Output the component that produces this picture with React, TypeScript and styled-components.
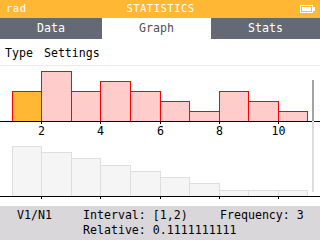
import React from 'react';
import styled, { createGlobalStyle } from 'styled-components';

const mono = `"DejaVu Sans Mono", "Liberation Mono", monospace`;

const GlobalStyle = createGlobalStyle`
  html, body {
    margin: 0;
    padding: 0;
    background: #ffffff;
  }
  body {
    width: 320px;
    height: 240px;
    overflow: hidden;
    font-family: ${mono};
  }
`;

const Screen = styled.div`
  width: 320px;
  height: 240px;
  display: flex;
  flex-direction: column;
  overflow: hidden;
  background: #ffffff;
  font-family: ${mono};
`;

// Orange status bar at the very top
const TitleBar = styled.header`
  height: 18px;
  flex: none;
  background: #ffb734;
  color: #ffffff;
  display: grid;
  grid-template-columns: 1fr auto 1fr;
  align-items: start;
  padding: 0 5px 0 6px;
  font-size: 10.5px;
  letter-spacing: 0.5px;
  line-height: 16px;
`;

const Battery = styled.svg`
  justify-self: end;
  margin-top: 5px;
`;

const TabBar = styled.nav`
  height: 21px;
  flex: none;
  display: flex;
  background: #656975;
`;

const Tab = styled.div<{ $active?: boolean }>`
  flex: 1 1 auto;
  text-align: center;
  font-size: 11.6px;
  line-height: 21px;
  color: ${p => (p.$active ? '#4f4f4f' : '#ffffff')};
  background: ${p => (p.$active ? '#ffffff' : 'transparent')};
`;

// "Type  Settings" buttons row
const Toolbar = styled.div`
  height: 23px;
  flex: none;
  padding: 3px 0 0 5px;
  display: flex;
  gap: 11px;
  border-bottom: 1px solid #ececec;
  font-size: 11.6px;
  line-height: 23px;
  color: #000000;
`;

const ChartArea = styled.div`
  position: relative;
  height: 140px;
  flex: none;
  overflow: hidden;
`;

const ScrollTrack = styled.div`
  position: absolute;
  right: 6px;
  top: 14px;
  width: 2px;
  height: 112px;
  background: #dcdcdc;
`;

const ScrollThumb = styled.div`
  width: 100%;
  height: 41px;
  background: #a3a3a3;
`;

// Bottom info banner for the selected bar
const InfoBanner = styled.footer`
  flex: 1;
  background: #dad7da;
  padding: 2px 0 0 17px;
  display: grid;
  grid-template-columns: 66px 137px auto;
  grid-auto-rows: 15px;
  font-size: 11.6px;
  line-height: 15px;
  color: #000000;
  white-space: pre;
`;

const Relative = styled.span`
  grid-column: 2 / span 2;
`;

const first = [3, 5, 3, 4, 3, 2, 1, 3, 2, 1];
const second = [8, 7, 6, 5, 4, 3, 2, 1, 1, 1];

const xOf = (v: number) => Math.round(11.8 + 29.55 * (v - 1));

type HistProps = {
  values: number[];
  axis: number;
  fill: string;
  stroke: string;
  selectedFill?: string;
};

function Histogram({ values, axis, fill, stroke, selectedFill }: HistProps) {
  const max = Math.max(...values);
  return (
    <g>
      {values.map((v, i) => {
        const x0 = xOf(i + 1);
        const x1 = xOf(i + 2);
        const h = Math.round((v / max) * 50);
        return (
          <rect
            key={i}
            x={x0 + 0.5}
            y={axis - h + 0.5}
            width={x1 - x0}
            height={h}
            fill={i === 0 && selectedFill ? selectedFill : fill}
            stroke={stroke}
            strokeWidth={1}
          />
        );
      })}
      <line x1={0} x2={320} y1={axis + 0.5} y2={axis + 0.5} stroke="#000" strokeWidth={1} />
      {[2, 4, 6, 8, 10].map(t => (
        <line
          key={t}
          x1={xOf(t) + 0.5}
          x2={xOf(t) + 0.5}
          y1={axis + 1}
          y2={axis + 3}
          stroke="#000"
          strokeWidth={1}
        />
      ))}
    </g>
  );
}

export default function App() {
  return (
    <Screen>
      <GlobalStyle />
      <TitleBar>
        <span>rad</span>
        <span>STATISTICS</span>
        <Battery width="15" height="8" viewBox="0 0 15 8">
          <rect x="0.5" y="0.5" width="12" height="7" fill="none" stroke="#fff" />
          <rect x="2" y="2" width="9" height="4" fill="#fff" />
          <rect x="13" y="2" width="2" height="4" fill="#fff" />
        </Battery>
      </TitleBar>
      <TabBar>
        <Tab>Data</Tab>
        <Tab $active>Graph</Tab>
        <Tab>Stats</Tab>
      </TabBar>
      <Toolbar>
        <span>Type</span>
        <span>Settings</span>
      </Toolbar>
      <ChartArea>
        <svg width="320" height="140" viewBox="0 0 320 140">
          <Histogram values={first} axis={55} fill="#ffcccc" stroke="#ff0000" selectedFill="#ffb734" />
          {[2, 4, 6, 8, 10].map(t => (
            <text
              key={t}
              x={xOf(t) + 0.5}
              y={69}
              textAnchor="middle"
              fontFamily={mono}
              fontSize="11.6"
              fill="#000"
            >
              {t}
            </text>
          ))}
          <Histogram values={second} axis={130} fill="#f5f5f5" stroke="#dedede" />
        </svg>
        <ScrollTrack>
          <ScrollThumb />
        </ScrollTrack>
      </ChartArea>
      <InfoBanner>
        <span>V1/N1</span>
        <span>Interval: [1,2)</span>
        <span>Frequency: 3</span>
        <span />
        <Relative>Relative: 0.1111111111</Relative>
      </InfoBanner>
    </Screen>
  );
}
